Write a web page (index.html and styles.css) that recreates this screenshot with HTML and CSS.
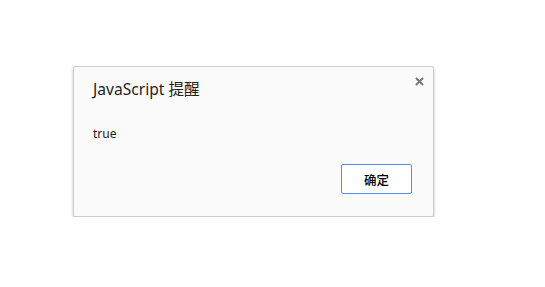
FILE: index.html
```html
<!DOCTYPE html>
<html lang="zh-CN">
<head>
<meta charset="utf-8">
<link rel="stylesheet" href="styles.css">
</head>
<body>
<div class="dialog">
  <button class="close" aria-label="关闭">
    <svg width="9" height="9" viewBox="0 0 9 9"><path d="M1 1 L8 8 M8 1 L1 8" stroke="#777" stroke-width="2"/></svg>
  </button>
  <div class="title">JavaScript 提醒</div>
  <div class="message">true</div>
  <div class="actions">
    <button class="ok">确定</button>
  </div>
</div>
</body>
</html>
```
FILE: styles.css
```css
html, body { margin: 0; padding: 0; background: #fff; }
body { font-family: "Noto Sans", "Noto Sans CJK SC", sans-serif; }
.dialog {
  position: relative;
  box-sizing: border-box;
  width: 361px;
  height: 151px;
  margin: 66px 0 0 73px;
  background: #fafafa;
  border: 1px solid #cccccc;
  border-radius: 2px;
  box-shadow: 0 2px 3px rgba(0,0,0,0.25);
  padding: 10px 21px 0 19px;
  display: flex;
  flex-direction: column;
}
.close {
  position: absolute;
  top: 10px;
  right: 9px;
  width: 9px;
  height: 9px;
  padding: 0;
  border: 0;
  background: none;
  display: block;
}
.close svg { display: block; }
.title {
  font-size: 15.6px;
  line-height: 24px;
  color: #222;
}
.message {
  margin-top: 25px;
  font-size: 12px;
  line-height: 16px;
  color: #222;
}
.actions {
  margin-top: 22px;
  display: flex;
  justify-content: flex-end;
}
.ok {
  box-sizing: border-box;
  width: 71px;
  height: 30px;
  background: #fff;
  border: 1px solid #4d90fe;
  border-radius: 2px;
  font-family: "Noto Sans CJK SC", sans-serif;
  font-size: 12.5px;
  font-weight: 500;
  color: #000;
  padding: 0;
}
```
